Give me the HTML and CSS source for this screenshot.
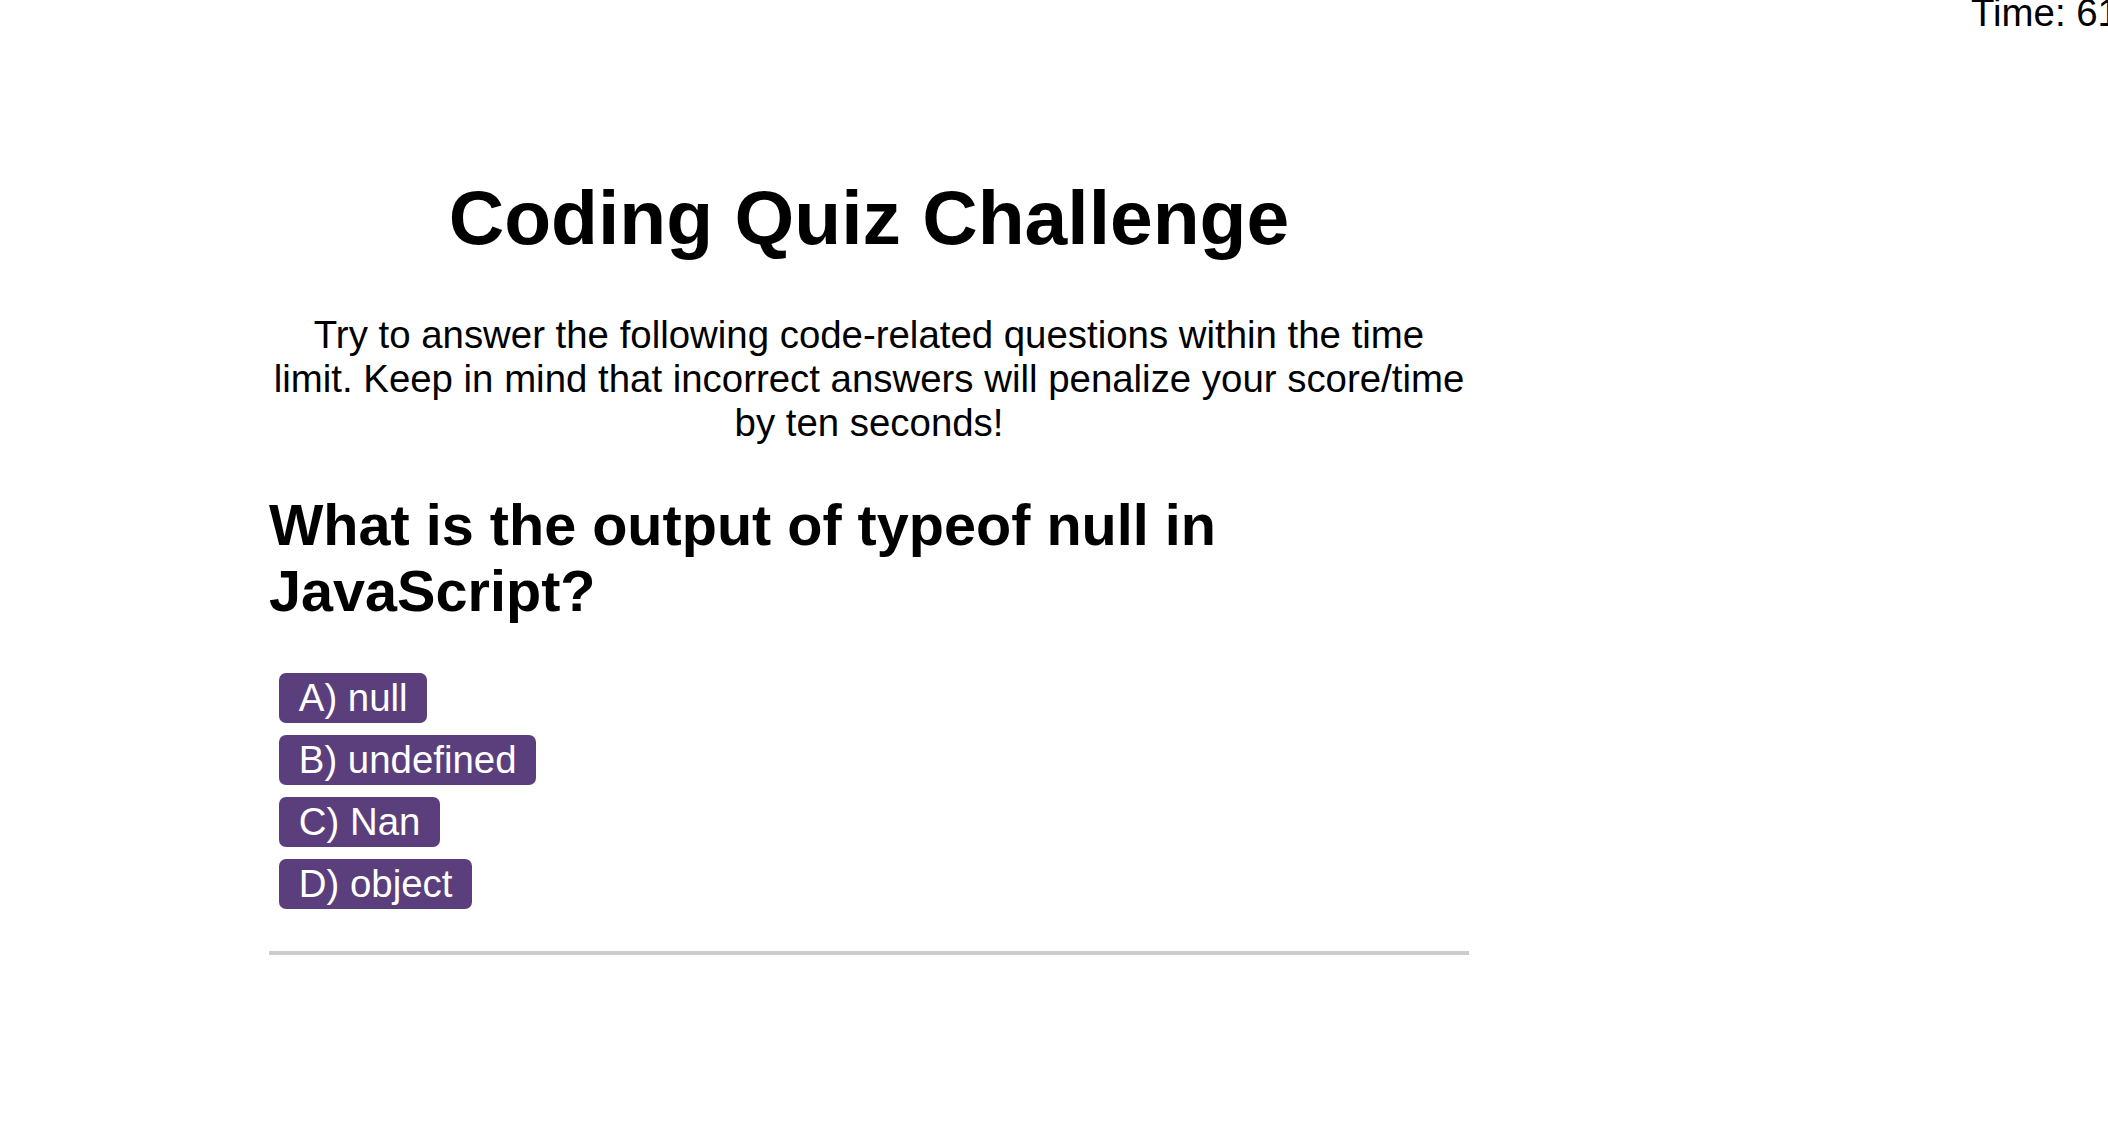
FILE: index.html
```html
<!DOCTYPE html>
<html lang="en">
<head>
<meta charset="utf-8">
<title>Coding Quiz Challenge</title>
<link rel="stylesheet" href="styles.css">
</head>
<body>
<header class="topbar">
  <div class="timer">Time: 61</div>
</header>
<main class="quiz">
  <h1 class="title">Coding Quiz Challenge</h1>
  <p class="intro">Try to answer the following code-related questions within the time limit. Keep in mind that incorrect answers will penalize your score/time by ten seconds!</p>
  <h2 class="question">What is the output of typeof null in JavaScript?</h2>
  <div class="choices">
    <button class="choice">A) null</button>
    <button class="choice">B) undefined</button>
    <button class="choice">C) Nan</button>
    <button class="choice">D) object</button>
  </div>
  <hr class="divider">
</main>
</body>
</html>
```
FILE: styles.css
```css
html, body {
  margin: 0;
  padding: 0;
  overflow: hidden;
  background: #ffffff;
}

body {
  width: 2108px;
  height: 1128px;
  font-family: "Liberation Sans", Arial, Helvetica, sans-serif;
  color: #000000;
}

.topbar {
  display: flex;
  justify-content: flex-end;
  margin-top: -9px;
  height: 44px;
}

.timer {
  width: 137px;
  white-space: nowrap;
  font-size: 38.4px;
  line-height: 44px;
}

.quiz {
  width: 1200px;
  margin-left: 269px;
}

.title {
  margin: 138px 0 51.5px;
  font-size: 76.8px;
  line-height: 88px;
  font-weight: bold;
  text-align: center;
}

.intro {
  margin: 0 0 47.8px;
  padding: 0 3px;
  font-size: 38.4px;
  line-height: 44px;
  text-align: center;
}

.question {
  margin: 0 0 48.4px;
  font-size: 57.6px;
  line-height: 66px;
  font-weight: bold;
}

.choices {
  display: flex;
  flex-direction: column;
  align-items: flex-start;
  gap: 11.2px;
  margin-left: 10px;
}

.choice {
  margin: 0;
  border: none;
  border-radius: 7px;
  padding: 3.4px 19.8px 3.4px;
  background: #5a3f7c;
  color: #ffffff;
  font-family: "Liberation Sans", Arial, Helvetica, sans-serif;
  font-size: 38.4px;
  line-height: 44px;
  cursor: pointer;
}

.divider {
  margin: 41.7px 0 0;
  height: 4px;
  border: none;
  background: #cccccc;
}
```
